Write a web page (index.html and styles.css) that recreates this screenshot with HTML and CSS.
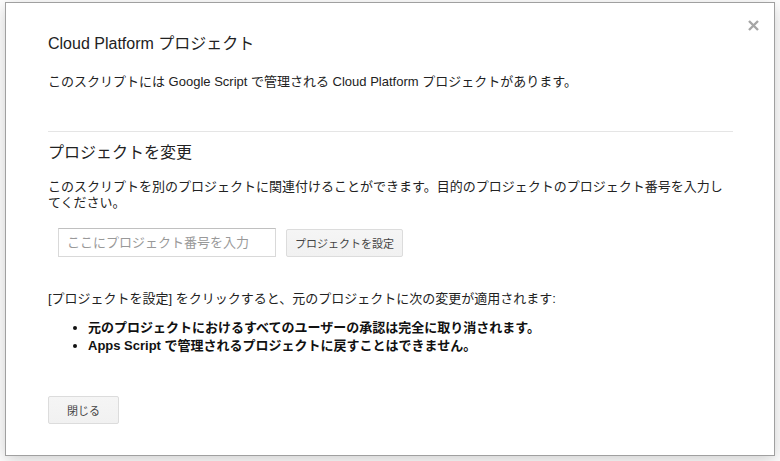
FILE: index.html
```html
<!DOCTYPE html>
<html lang="ja">
<head>
<meta charset="utf-8">
<title>Cloud Platform プロジェクト</title>
<link rel="stylesheet" href="styles.css">
</head>
<body>
<div class="dialog">
  <button class="close" aria-label="閉じる">
    <svg width="11" height="11" viewBox="0 0 11 11"><path d="M1 1 L10 10 M10 1 L1 10" stroke="#a6a6a6" stroke-width="2.4" fill="none"/></svg>
  </button>
  <h1 class="title">Cloud Platform プロジェクト</h1>
  <p class="text p1">このスクリプトには Google Script で管理される Cloud Platform プロジェクトがあります。</p>
  <div class="divider"></div>
  <h2 class="title h2">プロジェクトを変更</h2>
  <p class="text p2">このスクリプトを別のプロジェクトに関連付けることができます。目的のプロジェクトのプロジェクト番号を入力してください。</p>
  <div class="row">
    <input class="field" type="text" placeholder="ここにプロジェクト番号を入力">
    <button class="btn">プロジェクトを設定</button>
  </div>
  <p class="text p3">[プロジェクトを設定] をクリックすると、元のプロジェクトに次の変更が適用されます:</p>
  <ul class="list">
    <li>元のプロジェクトにおけるすべてのユーザーの承認は完全に取り消されます。</li>
    <li>Apps Script で管理されるプロジェクトに戻すことはできません。</li>
  </ul>
  <div class="footer">
    <button class="btn close-btn">閉じる</button>
  </div>
</div>
</body>
</html>
```

FILE: styles.css
```css
html, body {
  margin: 0;
  padding: 0;
  background: #fff;
}
body {
  font-family: "Liberation Sans", Arial, "Noto Sans CJK JP", sans-serif;
  color: #222;
  width: 780px;
  height: 461px;
  overflow: hidden;
}
.dialog {
  position: relative;
  box-sizing: border-box;
  margin: 2px 0 0 5px;
  width: 770px;
  height: 454px;
  border: 1px solid #a0a0a0;
  background: #fff;
  box-shadow: 0 4px 16px rgba(0, 0, 0, 0.2);
  padding: 31px 41px 0 42px;
}
.close {
  position: absolute;
  top: 17px;
  right: 15px;
  width: 11px;
  height: 11px;
  padding: 0;
  border: 0;
  background: none;
  display: flex;
}
.title {
  margin: 0;
  font-size: 16px;
  font-weight: normal;
  line-height: 20px;
  color: #222;
}
.text {
  margin: 0;
  font-size: 13px;
  line-height: 16px;
}
.p1 {
  margin-top: 20px;
}
.divider {
  margin-top: 41px;
  height: 1px;
  background: #e5e5e5;
}
.h2 {
  margin-top: 11px;
}
.p2 {
  margin-top: 16px;
}
.row {
  margin-top: 17px;
  margin-left: 10px;
  display: flex;
  align-items: center;
  gap: 10px;
}
.field {
  box-sizing: border-box;
  width: 218px;
  height: 29px;
  margin: 0;
  padding: 0 8px;
  border: 1px solid #d9d9d9;
  border-top-color: #c0c0c0;
  font-family: inherit;
  font-size: 13px;
  color: #222;
  outline: none;
}
.field::placeholder {
  color: #999;
}
.btn {
  box-sizing: border-box;
  height: 28px;
  min-width: 71px;
  margin: 0;
  padding: 0 8px;
  border: 1px solid #dcdcdc;
  border-radius: 2px;
  background: linear-gradient(#f5f5f5, #f1f1f1);
  font-family: inherit;
  font-size: 11px;
  color: #444;
}
.p3 {
  margin-top: 34px;
}
.list {
  margin: 12px 0 0;
  padding-left: 40px;
  font-size: 13px;
  line-height: 18px;
  font-weight: bold;
  color: #111;
}
.footer {
  margin-top: 41px;
  display: flex;
}
```
